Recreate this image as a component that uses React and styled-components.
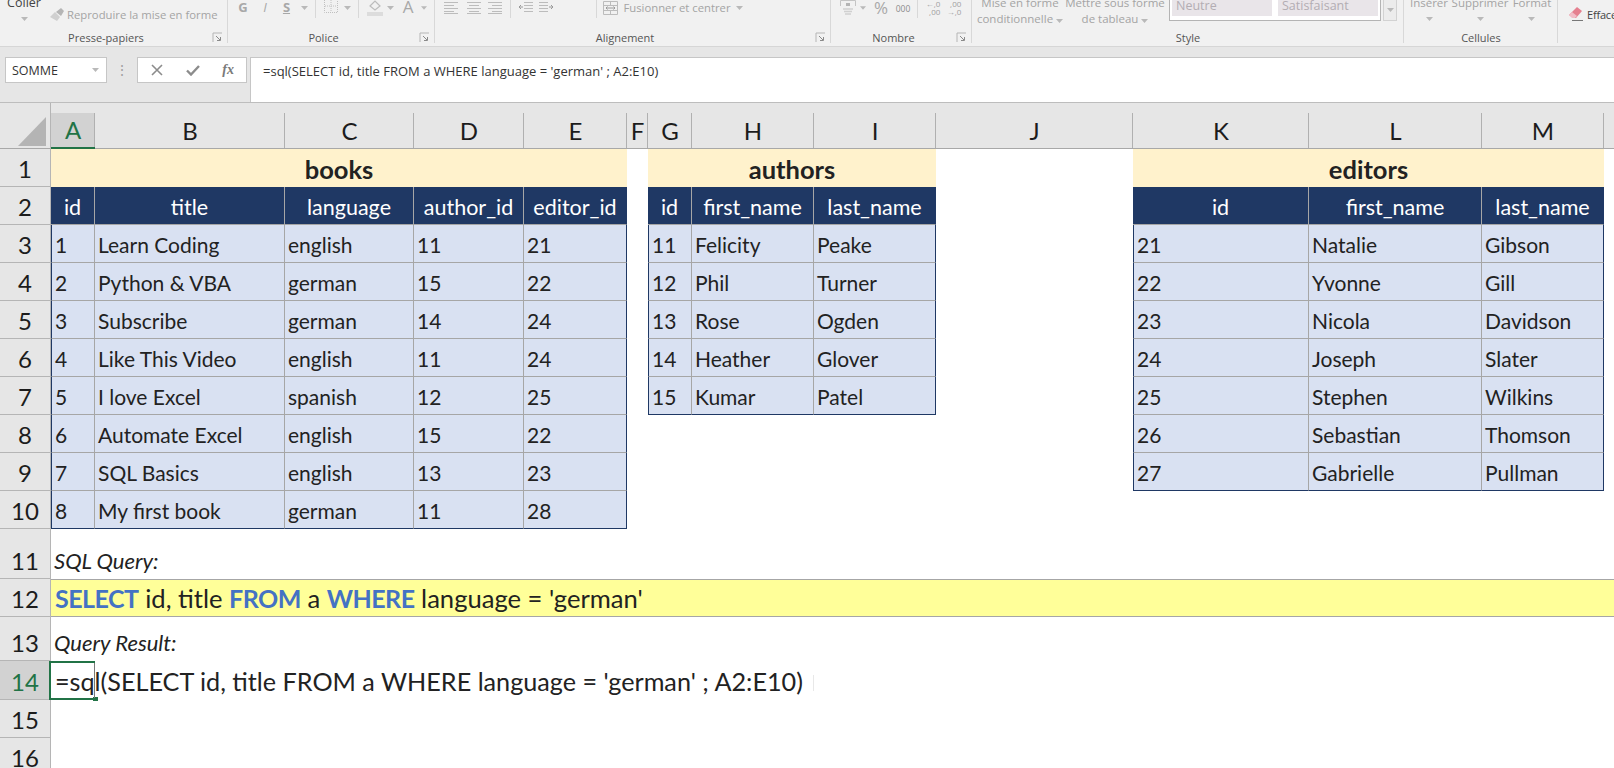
import styled, { createGlobalStyle } from "styled-components";

const ColWidths = [44, 190, 129, 110, 103, 21, 44, 122, 122, 197, 176, 173, 122, 10];
const ColNames = ["A", "B", "C", "D", "E", "F", "G", "H", "I", "J", "K", "L", "M", ""];
const RowHeights = [38, 38, 38, 38, 38, 38, 38, 38, 38, 38, 50, 38, 44, 39, 38, 38];

const Tables = [
  {
    name: "books",
    head: ["id", "title", "language", "author_id", "editor_id"],
    rows: [
      ["1", "Learn Coding", "english", "11", "21"],
      ["2", "Python & VBA", "german", "15", "22"],
      ["3", "Subscribe", "german", "14", "24"],
      ["4", "Like This Video", "english", "11", "24"],
      ["5", "I love Excel", "spanish", "12", "25"],
      ["6", "Automate Excel", "english", "15", "22"],
      ["7", "SQL Basics", "english", "13", "23"],
      ["8", "My first book", "german", "11", "28"],
    ],
  },
  {
    name: "authors",
    head: ["id", "first_name", "last_name"],
    rows: [
      ["11", "Felicity", "Peake"],
      ["12", "Phil", "Turner"],
      ["13", "Rose", "Ogden"],
      ["14", "Heather", "Glover"],
      ["15", "Kumar", "Patel"],
    ],
  },
  {
    name: "editors",
    head: ["id", "first_name", "last_name"],
    rows: [
      ["21", "Natalie", "Gibson"],
      ["22", "Yvonne", "Gill"],
      ["23", "Nicola", "Davidson"],
      ["24", "Joseph", "Slater"],
      ["25", "Stephen", "Wilkins"],
      ["26", "Sebastian", "Thomson"],
      ["27", "Gabrielle", "Pullman"],
    ],
  },
];

function Chevron() {
  return (
    <svg width="7" height="4" viewBox="0 0 7 4">
      <path d="M0 0h7L3.5 4z" fill="#b9b9b9" />
    </svg>
  );
}

function Launcher() {
  return (
    <svg width="11" height="11" viewBox="0 0 11 11" fill="none">
      <path d="M1 10V1h9" stroke="#b5b5b5" />
      <path d="M4 4l4 4M8.5 5v3.5H5" stroke="#8a8a8a" />
    </svg>
  );
}

function Brush() {
  return (
    <svg width="18" height="14" viewBox="0 0 18 14">
      <path d="M1 9l5-5 5 5-3 4z" fill="#d0d0d0" />
      <path d="M7 4l5-4 3 3-3 5z" fill="#b5b5b5" />
    </svg>
  );
}

function BorderIcon() {
  return (
    <svg width="14" height="14" viewBox="0 0 14 14" fill="none" stroke="#c0c0c0" strokeDasharray="1 1">
      <path d="M.5 0v12.5h13V0M7 0v12M1 6h12" />
    </svg>
  );
}

function FillIcon() {
  return (
    <svg width="16" height="16" viewBox="0 0 16 16" fill="none">
      <path d="M3 6l5-5 5 5-5 4z" stroke="#bcbcbc" strokeWidth="1.2" />
      <rect x="0" y="12" width="16" height="4" fill="#dcdcdc" />
    </svg>
  );
}

function LinesIcon({ align }) {
  const short = { left: "M0 4.5h10M0 10.5h10", center: "M2 4.5h10M2 10.5h10", right: "M4 4.5h10M4 10.5h10" }[align];
  return (
    <svg width="14" height="13" viewBox="0 0 14 13" fill="none" stroke="#bcbcbc">
      <path d="M0 1.5h14M0 7.5h14M0 12.5h14" />
      <path d={short} />
    </svg>
  );
}

function IndentIcon({ flip }) {
  return (
    <svg width="15" height="13" viewBox="0 0 15 13" fill="none" style={flip ? { transform: "scaleX(-1)" } : undefined}>
      <path d="M6 1.5h9M6 4.5h9M6 7.5h9M6 10.5h9" stroke="#bcbcbc" />
      <path d="M5 6H1M3 4L1 6l2 2" stroke="#9a9a9a" />
    </svg>
  );
}

function MergeIcon() {
  return (
    <svg width="15" height="14" viewBox="0 0 15 14" fill="none" stroke="#bcbcbc">
      <path d="M.5.5h14v13H.5zM.5 4.5h14M.5 9.5h14M7.5.5v4M7.5 9.5v4" />
      <path d="M3 7h9M4.5 5.5L3 7l1.5 1.5M10.5 5.5L12 7l-1.5 1.5" stroke="#9a9a9a" />
    </svg>
  );
}

function AccountIcon() {
  return (
    <svg width="16" height="15" viewBox="0 0 16 15" fill="none">
      <path d="M.5 6V.5h15V6" stroke="#c4c4c4" />
      <path d="M6 3h4v3H6z" fill="#b5b5b5" />
      <path d="M3 9h10M4 11.5h8M5 14h6" stroke="#d0d0d0" strokeWidth="1.4" />
    </svg>
  );
}

function Eraser() {
  return (
    <svg width="15" height="14" viewBox="0 0 15 14">
      <path d="M9 0l5 4-6 7H5L1 8z" fill="#e5808f" />
      <path d="M1 8l3-3 5 4-2 2H4z" fill="#f2bcc6" />
      <path d="M4 13.5h11" stroke="#777" />
    </svg>
  );
}

function CancelIcon() {
  return (
    <svg width="12" height="12" viewBox="0 0 12 12" fill="none" stroke="#8c8c8c" strokeWidth="1.6">
      <path d="M1 1l10 10M11 1L1 11" />
    </svg>
  );
}

function CheckIcon() {
  return (
    <svg width="14" height="11" viewBox="0 0 14 11" fill="none" stroke="#8c8c8c" strokeWidth="2.4">
      <path d="M1 5.5l4 4 8-8.5" />
    </svg>
  );
}

function Corner() {
  return (
    <svg width="28" height="29" viewBox="0 0 28 29">
      <path d="M28 0v29H0z" fill="#b4b4b4" />
    </svg>
  );
}

function TableRow({ table, index }) {
  const span = table.head.length;
  const cells = [];
  if (index === 0) {
    cells.push(
      <TitleCell key="t" $span={span}>
        {table.name}
      </TitleCell>
    );
  } else if (index === 1) {
    table.head.forEach((h, i) => cells.push(<HeadCell key={h} $last={i === span - 1}>{h}</HeadCell>));
  } else if (table.rows[index - 2]) {
    const lastRow = index - 2 === table.rows.length - 1;
    table.rows[index - 2].forEach((v, i) =>
      cells.push(
        <BodyCell key={i} $first={i === 0} $last={i === span - 1} $end={lastRow}>
          {v}
        </BodyCell>
      )
    );
  } else {
    cells.push(<Blank key="b" $span={span} />);
  }
  return (
    <>
      {cells}
      <Blank />
    </>
  );
}

function RowRange({ num }) {
  let content;
  if (num <= 10) {
    content = Tables.map((t) => <TableRow key={t.name} table={t} index={num - 1} />);
  } else if (num === 11) {
    content = <NoteCell>SQL Query:</NoteCell>;
  } else if (num === 12) {
    content = (
      <QueryCell>
        <Kw>SELECT</Kw> id, title <Kw>FROM</Kw> a <Kw>WHERE</Kw> language = 'german'
      </QueryCell>
    );
  } else if (num === 13) {
    content = <NoteCell>Query Result:</NoteCell>;
  } else if (num === 14) {
    content = (
      <>
        <ActiveCell>
          <ActiveText>
            =sql(SELECT id, title FROM a WHERE language = 'german' ; A2:E10)
            <Caret />
          </ActiveText>
          <Handle />
        </ActiveCell>
        <Blank $span={13} />
      </>
    );
  } else {
    content = <Blank $span={14} />;
  }
  return (
    <>
      <RowHead $on={num === 14}>{num}</RowHead>
      {content}
    </>
  );
}

export default function App() {
  return (
    <Page>
      <GlobalStyle />
      <Ribbon>
        <Group $w={228}>
          <Tools>
            <Tool $w={48} $top={-5}>
              <Stack>
                <strong>Coller</strong>
                <Chevron />
              </Stack>
            </Tool>
            <Tool $w={19} $top={8}><Brush /></Tool>
            <Tool $top={7}><DimText>Reproduire la mise en forme</DimText></Tool>
          </Tools>
          <Foot>
            <GroupLabel>Presse-papiers</GroupLabel>
            <LauncherSlot><Launcher /></LauncherSlot>
          </Foot>
        </Group>
        <Group $w={207}>
          <Tools $pad={4}>
            <Tool $w={22} $top={-2}><Letter $bold>G</Letter></Tool>
            <Tool $w={22} $top={-2}><Letter $italic>I</Letter></Tool>
            <Tool $w={21} $top={-2}><Letter $bold $under>S</Letter></Tool>
            <Tool $w={14} $top={6}><Chevron /></Tool>
            <Tool $w={8}><ToolSep /></Tool>
            <Tool $w={23}><BorderIcon /></Tool>
            <Tool $w={10} $top={6}><Chevron /></Tool>
            <Tool $w={12}><ToolSep /></Tool>
            <Tool $w={21}><FillIcon /></Tool>
            <Tool $w={10} $top={6}><Chevron /></Tool>
            <Tool $w={26} $top={-2}><Letter $big>A</Letter></Tool>
            <Tool $w={6} $top={6}><Chevron /></Tool>
          </Tools>
          <Foot>
            <GroupLabel>Police</GroupLabel>
            <LauncherSlot><Launcher /></LauncherSlot>
          </Foot>
        </Group>
        <Group $w={396}>
          <Tools $pad={4}>
            <Tool $w={24} $top={1}><LinesIcon align="left" /></Tool>
            <Tool $w={21} $top={1}><LinesIcon align="center" /></Tool>
            <Tool $w={22} $top={1}><LinesIcon align="right" /></Tool>
            <Tool $w={8}><ToolSep /></Tool>
            <Tool $w={23} $top={1}><IndentIcon /></Tool>
            <Tool $w={19} $top={1}><IndentIcon flip /></Tool>
            <Tool $w={36} />
            <Tool $w={8}><ToolSep /></Tool>
            <Tool $w={21} $top={1}><MergeIcon /></Tool>
            <Tool $w={112}><DimText>Fusionner et centrer</DimText></Tool>
            <Tool $w={12} $top={6}><Chevron /></Tool>
          </Tools>
          <Foot>
            <GroupLabel>Alignement</GroupLabel>
            <LauncherSlot><Launcher /></LauncherSlot>
          </Foot>
        </Group>
        <Group $w={141}>
          <Tools $pad={4}>
            <Tool $w={25}><AccountIcon /></Tool>
            <Tool $w={6} $top={6}><Chevron /></Tool>
            <Tool $w={30} $top={-1}><Letter $big>%</Letter></Tool>
            <Tool $w={14} $top={1}><TinyText>000</TinyText></Tool>
            <Tool $w={14}><ToolSep /></Tool>
            <Tool $w={18}><DecimalText>←,0<br />,00</DecimalText></Tool>
            <Tool $w={24}><DecimalText>,00<br />→,0</DecimalText></Tool>
          </Tools>
          <Foot>
            <GroupLabel>Nombre</GroupLabel>
            <LauncherSlot><Launcher /></LauncherSlot>
          </Foot>
        </Group>
        <Group $w={432}>
          <Tools>
            <Tool $w={96} $top={-5}><TwoLine>Mise en forme<br />conditionnelle <Chevron /></TwoLine></Tool>
            <Tool $w={94} $top={-5}><TwoLine>Mettre sous forme<br />de tableau <Chevron /></TwoLine></Tool>
            <Gallery>
              <StyleChip>Neutre</StyleChip>
              <StyleChip>Satisfaisant</StyleChip>
            </Gallery>
            <GalleryScroll><Chevron /></GalleryScroll>
          </Tools>
          <Foot>
            <GroupLabel>Style</GroupLabel>
          </Foot>
        </Group>
        <Group $w={154}>
          <Tools>
            <Tool $w={50} $top={-5}><Stack>Insérer<Chevron /></Stack></Tool>
            <Tool $w={52} $top={-5}><Stack>Supprimer<Chevron /></Stack></Tool>
            <Tool $w={52} $top={-5}><Stack>Format<Chevron /></Stack></Tool>
          </Tools>
          <Foot>
            <GroupLabel>Cellules</GroupLabel>
          </Foot>
        </Group>
        <LastGroup>
          <Eraser />
          <span>Effacer</span>
        </LastGroup>
      </Ribbon>

      <FormulaBar>
        <NameBox>
          SOMME
          <Chevron />
        </NameBox>
        <Grip>⋮</Grip>
        <FxBox>
          <CancelIcon />
          <CheckIcon />
          <FxMark>fx</FxMark>
        </FxBox>
        <FormulaInput>=sql(SELECT id, title FROM a WHERE language = 'german' ; A2:E10)</FormulaInput>
      </FormulaBar>

      <Sheet>
        <CornerCell><Corner /></CornerCell>
        {ColNames.map((c, i) => (
          <ColHead key={i} $on={c === "A"} $plain={c === ""}>
            {c}
          </ColHead>
        ))}
        {RowHeights.map((_, r) => (
          <RowRange key={r} num={r + 1} />
        ))}
      </Sheet>
    </Page>
  );
}

const GlobalStyle = createGlobalStyle`
  html, body { margin: 0; padding: 0; background: #fff; overflow: hidden; }
  * { box-sizing: border-box; }
`;

const Page = styled.div`
  width: 1614px;
  height: 768px;
  overflow: hidden;
  font-family: "Open Sans", sans-serif;
`;

const Ribbon = styled.div`
  display: flex;
  height: 47px;
  background: #f1f1f1;
  border-bottom: 1px solid #d6d6d6;
  overflow: hidden;
`;

const Group = styled.div`
  width: ${(p) => p.$w}px;
  height: 46px;
  flex: none;
  display: flex;
  flex-direction: column;
  position: relative;
  &::after {
    content: "";
    position: absolute;
    right: 0;
    top: 0;
    bottom: 3px;
    width: 1px;
    background: #d8d8d8;
  }
`;

const LastGroup = styled.div`
  display: flex;
  align-items: flex-start;
  gap: 4px;
  padding: 7px 0 0 10px;
  font-size: 11px;
  letter-spacing: -0.2px;
  line-height: 16px;
  color: #444;
  white-space: nowrap;
`;

const Tools = styled.div`
  height: 30px;
  display: flex;
  align-items: flex-start;
  padding-left: ${(p) => p.$pad || 0}px;
`;

const Tool = styled.div`
  flex: none;
  width: ${(p) => (p.$w ? `${p.$w}px` : "auto")};
  margin-top: ${(p) => p.$top || 0}px;
  display: flex;
  justify-content: center;
  color: #a4a4a4;
  font-size: 11.5px;
  line-height: 16px;
  white-space: nowrap;
`;

const Stack = styled.div`
  display: flex;
  flex-direction: column;
  align-items: center;
  gap: 6px;
  strong { font-weight: 400; font-size: 12.5px; color: #444; }
`;

const DimText = styled.span`
  font-size: 11.3px;
  color: #a4a4a4;
`;

const TinyText = styled.span`
  font-size: 8.5px;
  color: #8c8c8c;
`;

const DecimalText = styled.div`
  font-size: 8px;
  line-height: 8px;
  text-align: right;
  color: #a0a0a0;
`;

const TwoLine = styled.div`
  text-align: center;
  font-size: 11.5px;
  line-height: 16px;
  color: #a4a4a4;
`;

const Letter = styled.span`
  font-size: ${(p) => (p.$big ? 17 : 13)}px;
  line-height: 18px;
  font-weight: ${(p) => (p.$bold ? 700 : 400)};
  font-style: ${(p) => (p.$italic ? "italic" : "normal")};
  text-decoration: ${(p) => (p.$under ? "underline" : "none")};
  color: #a8a8a8;
`;

const ToolSep = styled.div`
  width: 1px;
  height: 18px;
  background: #d8d8d8;
`;

const Foot = styled.div`
  height: 15px;
  display: flex;
  align-items: center;
`;

const GroupLabel = styled.div`
  flex: 1;
  text-align: center;
  font-size: 11px;
  color: #555;
`;

const LauncherSlot = styled.div`
  width: 16px;
  display: flex;
`;

const Gallery = styled.div`
  width: 212px;
  height: 23px;
  margin: -2px 0 0 7px;
  padding: 0 2px;
  flex: none;
  display: flex;
  gap: 6px;
  background: #fff;
  border: 1px solid #b4b4b4;
`;

const StyleChip = styled.div`
  width: 100px;
  height: 17px;
  padding: 0 4px;
  background: #e9e5e9;
  color: #b3adb3;
  font-size: 12.5px;
  line-height: 13px;
`;

const GalleryScroll = styled.div`
  width: 14px;
  height: 23px;
  margin: -2px 0 0 2px;
  display: flex;
  align-items: center;
  justify-content: center;
  border: 1px solid #d2d2d2;
  background: #ececec;
`;

const FormulaBar = styled.div`
  height: 56px;
  padding: 10px 0 0 5px;
  display: flex;
  align-items: flex-start;
  background: #e6e6e6;
  border-bottom: 1px solid #bdbdbd;
`;

const NameBox = styled.div`
  width: 102px;
  height: 26px;
  padding: 0 7px 0 6px;
  display: flex;
  align-items: center;
  justify-content: space-between;
  background: #fff;
  border: 1px solid #c6c6c6;
  font-size: 12.5px;
  color: #333;
`;

const Grip = styled.div`
  width: 30px;
  height: 26px;
  text-align: center;
  line-height: 26px;
  font-size: 14px;
  color: #a0a0a0;
`;

const FxBox = styled.div`
  width: 110px;
  height: 26px;
  padding: 0 12px 0 13px;
  display: flex;
  align-items: center;
  justify-content: space-between;
  background: #fff;
  border: 1px solid #c6c6c6;
`;

const FxMark = styled.span`
  font-family: "Liberation Serif", serif;
  font-style: italic;
  font-weight: 700;
  font-size: 14px;
  color: #7a7a7a;
`;

const FormulaInput = styled.div`
  margin-left: 3px;
  flex: 1;
  height: 45px;
  padding: 4px 12px;
  background: #fff;
  border: 1px solid #c6c6c6;
  border-right: 0;
  border-bottom: 0;
  font-size: 13px;
  line-height: 18px;
  color: #333;
  white-space: nowrap;
`;

const Sheet = styled.div`
  display: grid;
  grid-template-columns: 51px ${ColWidths.map((w) => `${w}px`).join(" ")};
  grid-template-rows: 46px ${RowHeights.map((h) => `${h}px`).join(" ")};
  font-family: "Lato", sans-serif;
  font-size: 21px;
  color: #222;
`;

const CornerCell = styled.div`
  padding: 14px 0 0 18px;
  background: #e6e6e6;
  border-bottom: 1px solid #a8a8a8;
  border-right: 1px solid #b5b5b5;
`;

const ColHead = styled.div`
  display: flex;
  align-items: flex-end;
  justify-content: center;
  padding-bottom: 2px;
  font-size: 24px;
  line-height: 30px;
  color: ${(p) => (p.$on ? "#217346" : "#1c1c1c")};
  background: ${(p) => (p.$on ? "linear-gradient(#e6e6e6 10px, #d2d2d2 10px)" : "#e6e6e6")};
  border-bottom: ${(p) => (p.$on ? "2px solid #217346" : "1px solid #a8a8a8")};
  position: relative;
  &::after {
    content: "";
    position: absolute;
    right: 0;
    top: 10px;
    bottom: 0;
    width: 1px;
    background: ${(p) => (p.$plain ? "transparent" : "#b0b0b0")};
  }
`;

const RowHead = styled.div`
  display: flex;
  align-items: flex-end;
  justify-content: center;
  padding-bottom: 2px;
  font-size: 24px;
  line-height: 30px;
  color: ${(p) => (p.$on ? "#217346" : "#1c1c1c")};
  background: ${(p) => (p.$on ? "#d2d2d2" : "#e6e6e6")};
  border-right: 1px solid #b5b5b5;
  border-bottom: 1px solid #b5b5b5;
`;

const Blank = styled.div`
  grid-column: span ${(p) => p.$span || 1};
`;

const TitleCell = styled.div`
  grid-column: span ${(p) => p.$span};
  display: flex;
  align-items: center;
  justify-content: center;
  padding-top: 2px;
  background: #fff2cc;
  font-size: 25.5px;
  font-weight: 700;
`;

const HeadCell = styled.div`
  display: flex;
  align-items: center;
  justify-content: center;
  padding-top: 2px;
  background: #1f3864;
  color: #fff;
  font-size: 21.5px;
  border-right: 1px solid ${(p) => (p.$last ? "#1f3864" : "#a6a6a6")};
  border-bottom: 1px solid #a6a6a6;
  white-space: nowrap;
`;

const BodyCell = styled.div`
  display: flex;
  align-items: center;
  padding: 2px 0 0 3px;
  background: #d9e1f2;
  border-left: ${(p) => (p.$first ? "1px solid #1f3864" : "0")};
  border-right: 1px solid ${(p) => (p.$last ? "#1f3864" : "#a6a6a6")};
  border-bottom: 1px solid ${(p) => (p.$end ? "#1f3864" : "#a6a6a6")};
  white-space: nowrap;
`;

const NoteCell = styled.div`
  grid-column: span 14;
  display: flex;
  align-items: flex-end;
  padding: 0 0 4px 3px;
  font-size: 22px;
  font-style: italic;
  line-height: 28px;
`;

const QueryCell = styled.div`
  grid-column: span 14;
  padding-left: 4px;
  line-height: 36px;
  background: #ffff99;
  border-top: 1px solid #a6a6a6;
  border-bottom: 1px solid #a6a6a6;
  font-size: 25.6px;
  white-space: pre;
`;

const Kw = styled.b`
  color: #4472c4;
  font-size: 25px;
  font-weight: 700;
  letter-spacing: -0.5px;
`;

const ActiveCell = styled.div`
  position: relative;
  margin-left: -2px;
  border: solid #217346;
  border-width: 2px 0 2px 2px;
  display: flex;
  align-items: center;
  &::after {
    content: "";
    position: absolute;
    right: 0;
    top: 0;
    bottom: 0;
    width: 1px;
    background: #7a7a7a;
  }
`;

const ActiveText = styled.div`
  position: relative;
  z-index: 1;
  padding-left: 4px;
  font-size: 25.2px;
  white-space: pre;
`;

const Caret = styled.span`
  display: inline-block;
  width: 1px;
  height: 16px;
  margin-left: 10px;
  background: #e8e8e8;
`;

const Handle = styled.div`
  position: absolute;
  right: -3px;
  bottom: -3px;
  width: 5px;
  height: 4px;
  background: #217346;
`;
